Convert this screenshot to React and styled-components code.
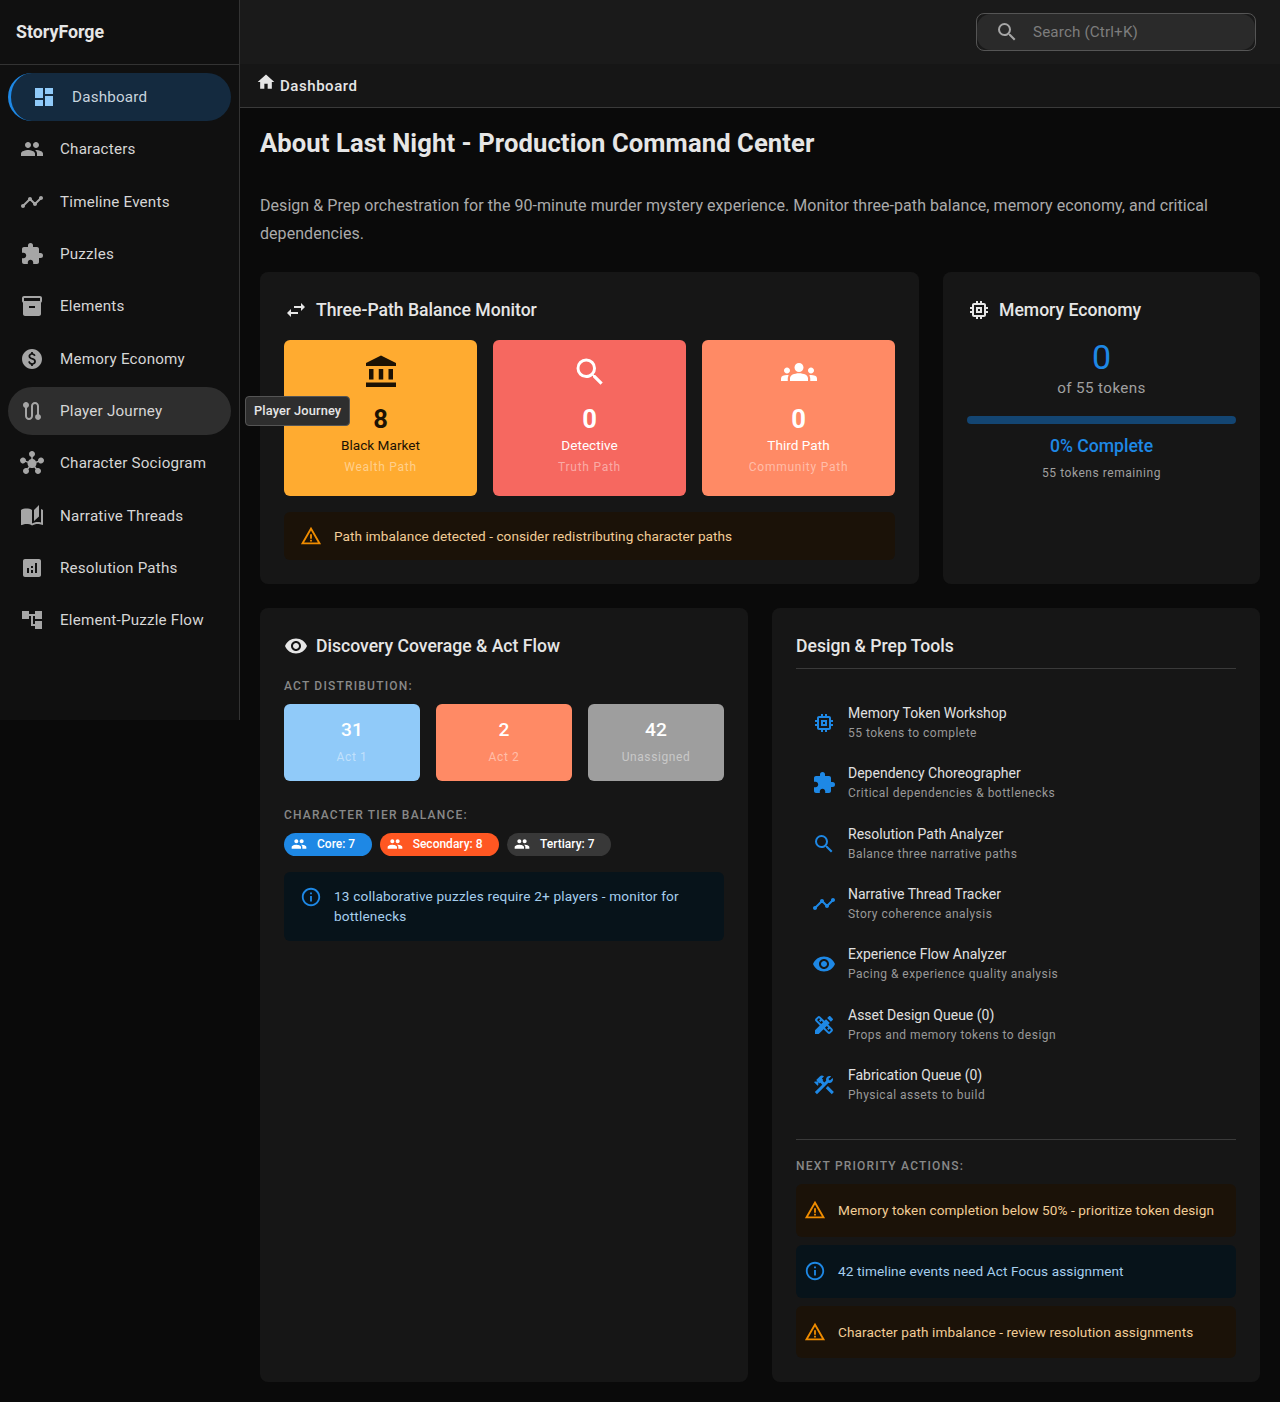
import styled, { createGlobalStyle } from "styled-components";
import {
  MdDashboard,
  MdPeople,
  MdTimeline,
  MdExtension,
  MdInventory2,
  MdPaid,
  MdRoute,
  MdHub,
  MdAutoStories,
  MdAnalytics,
  MdAccountTree,
  MdHome,
  MdSearch,
  MdSwapHoriz,
  MdMemory,
  MdAccountBalance,
  MdGroups,
  MdWarningAmber,
  MdInfoOutline,
  MdVisibility,
  MdDesignServices,
  MdConstruction,
} from "react-icons/md";

const GlobalStyle = createGlobalStyle`
  html, body {
    margin: 0;
    padding: 0;
    background: #0a0a0a;
  }
  * {
    box-sizing: border-box;
  }
  body {
    font-family: Roboto, "Liberation Sans", sans-serif;
    color: #e6e6e6;
  }
`;

const Shell = styled.div`
  display: flex;
  align-items: flex-start;
  width: 1280px;
  height: 1402px;
  overflow: hidden;
`;

const Sidebar = styled.aside`
  flex: 0 0 240px;
  height: 720px;
  background: #101010;
  border-right: 1px solid #333;
`;

const Brand = styled.div`
  display: flex;
  align-items: center;
  height: 65px;
  padding: 0 0 2px 16px;
  border-bottom: 1px solid #333;
  font-size: 17.8px;
  font-weight: 700;
  color: #e6e6e6;
`;

const NavList = styled.nav`
  display: flex;
  flex-direction: column;
  gap: 4px;
  padding: 8px;
`;

const NavItem = styled.div`
  position: relative;
  display: flex;
  align-items: center;
  height: 48.3px;
  padding-left: ${(props) => (props.$active ? "22px" : "12px")};
  border-radius: 24px;
  border-left: ${(props) => (props.$active ? "3px solid #1e88e5" : "none")};
  background: ${(props) => (props.$active ? "#142a3f" : props.$hover ? "#2e2e2e" : "transparent")};
  font-size: 15.2px;
  letter-spacing: 0.2px;
  color: ${(props) => (props.$active ? "#c8d4de" : "#d6d6d6")};

  & > svg {
    flex: none;
    font-size: 24px;
    color: ${(props) => (props.$active ? "#90caf9" : "#a6a6a6")};
    margin-right: 16px;
    margin-left: ${(props) => (props.$active ? "-1px" : "0")};
  }
`;

const Tooltip = styled.div`
  position: absolute;
  left: 237px;
  top: 9px;
  height: 30px;
  display: flex;
  align-items: center;
  padding: 0 8px;
  background: #2e2e2e;
  border: 1px solid #555;
  border-radius: 4px;
  font-size: 12.8px;
  font-weight: 500;
  letter-spacing: 0.15px;
  color: #e6e6e6;
  white-space: nowrap;
  z-index: 5;
`;

const Main = styled.main`
  flex: 1;
  min-width: 0;
`;

const TopBar = styled.header`
  display: flex;
  align-items: center;
  justify-content: flex-end;
  height: 64px;
  padding-right: 24px;
  background: #1a1a1a;
`;

const SearchBox = styled.div`
  width: 280px;
  height: 38px;
  border: 1px solid #555;
  border-radius: 8px;
`;

const SearchField = styled.div`
  display: flex;
  align-items: center;
  height: 100%;
  padding-left: 18px;
  background: #2a2a2a;
  border-radius: 14px;
  font-size: 15.2px;
  letter-spacing: 0.15px;
  color: #7d7d7d;

  & > svg {
    font-size: 24px;
    color: #a6a6a6;
    margin-right: 14px;
  }
`;

const Crumbs = styled.div`
  display: flex;
  align-items: center;
  height: 44px;
  padding-left: 18px;
  background: #161616;
  border-bottom: 1px solid #3a3a3a;
  font-size: 15px;
  font-weight: 500;
  letter-spacing: 0.55px;
  color: #e6e6e6;

  & > svg {
    font-size: 20px;
    margin-right: 4px;
    margin-top: -7px;
    margin-left: -2px;
  }
`;

const Content = styled.div`
  padding: 20px;
`;

const PageTitle = styled.h1`
  margin: 0;
  font-size: 25.6px;
  font-weight: 700;
  letter-spacing: 0.1px;
  line-height: 30px;
  color: #e6e6e6;
`;

const Intro = styled.p`
  margin: 34px 0 24px;
  font-size: 16px;
  letter-spacing: 0.05px;
  line-height: 28px;
  color: #ababab;
`;

const Row = styled.div`
  display: grid;
  grid-template-columns: ${(props) => props.$columns};
  gap: 24px;
  margin-bottom: 24px;

  &:last-child {
    margin-bottom: 0;
  }
`;

const Card = styled.section`
  padding: 24px;
  background: #161616;
  border-radius: 8px;
`;

const CardTitle = styled.h2`
  display: flex;
  align-items: center;
  gap: 8px;
  margin: 0 0 ${(props) => props.$gap || "16px"};
  height: 28px;
  font-size: 17.6px;
  font-weight: 500;
  color: #e6e6e6;

  & > svg {
    font-size: 24px;
  }
`;

const TileRow = styled.div`
  display: grid;
  grid-template-columns: repeat(3, 1fr);
  gap: 16px;
`;

const PathTile = styled.div`
  display: flex;
  flex-direction: column;
  align-items: center;
  height: 156px;
  padding-top: 14px;
  border-radius: 6px;
  background: ${(props) => props.$bg};
  color: ${(props) => props.$fg};

  & > svg {
    font-size: 36px;
  }
`;

const TileNumber = styled.div`
  margin-top: 14px;
  font-size: 25.6px;
  font-weight: 700;
  line-height: 30px;
`;

const TileName = styled.div`
  margin-top: 1px;
  font-size: 13.6px;
  line-height: 20px;
`;

const TileNote = styled.div`
  margin-top: 2px;
  font-size: 12px;
  letter-spacing: 0.75px;
  line-height: 20px;
  color: rgba(255, 255, 255, 0.45);
`;

const Alert = styled.div`
  display: flex;
  align-items: ${(props) => (props.$top ? "flex-start" : "center")};
  min-height: ${(props) => props.$height || "48px"};
  padding: ${(props) => props.$padding || "0 16px"};
  margin-top: ${(props) => props.$mt || "0"};
  border-radius: 6px;
  background: ${(props) => (props.$kind === "info" ? "#07131a" : "#1b1208")};
  color: ${(props) => (props.$kind === "info" ? "#a6cfee" : "#f2cd97")};
  font-size: 13.6px;
  letter-spacing: ${(props) => props.$spacing || "0.1px"};
  line-height: 20px;

  & > svg {
    flex: none;
    font-size: 22px;
    margin-right: 12px;
    color: ${(props) => (props.$kind === "info" ? "#1e88e5" : "#ef8c00")};
  }
`;

const MemoryBody = styled.div`
  display: flex;
  flex-direction: column;
  align-items: center;
  margin-top: -3px;
`;

const MemoryCount = styled.div`
  font-size: 34px;
  line-height: 40px;
  color: #1e88e5;
`;

const MemoryOf = styled.div`
  font-size: 15.2px;
  letter-spacing: 0.4px;
  line-height: 22px;
  color: #a0a0a0;
`;

const ProgressBar = styled.div`
  width: 100%;
  height: 8px;
  margin: 17px 0 9px;
  border-radius: 4px;
  background: #134572;
`;

const MemoryPercent = styled.div`
  font-size: 17.6px;
  font-weight: 500;
  line-height: 26px;
  color: #1e88e5;
`;

const MemoryLeft = styled.div`
  margin-top: 4px;
  font-size: 12px;
  letter-spacing: 0.55px;
  line-height: 20px;
  color: #a0a0a0;
`;

const SectionLabel = styled.div`
  margin: ${(props) => props.$margin || "0 0 10px"};
  font-size: 12px;
  font-weight: 500;
  letter-spacing: 1.2px;
  line-height: 16px;
  color: #888;
`;

const ActTile = styled.div`
  display: flex;
  flex-direction: column;
  align-items: center;
  height: 77px;
  padding-top: 12px;
  border-radius: 6px;
  background: ${(props) => props.$bg};
`;

const ActNumber = styled.div`
  font-size: 19.2px;
  font-weight: 500;
  line-height: 28px;
  color: #fff;
`;

const ActName = styled.div`
  margin-top: 3px;
  font-size: 12px;
  letter-spacing: 0.6px;
  line-height: 20px;
  color: rgba(255, 255, 255, 0.45);
`;

const ChipRow = styled.div`
  display: flex;
  gap: 8px;
`;

const Chip = styled.div`
  display: flex;
  align-items: center;
  height: 23px;
  padding: 0 16.5px 1px 7px;
  border-radius: 12px;
  background: ${(props) => props.$bg};
  color: #fff;
  font-size: 12px;
  font-weight: 500;

  & > svg {
    font-size: 16px;
    margin-right: 10px;
  }
`;

const Divider = styled.div`
  height: 1px;
  background: #3a3a3a;
`;

const ToolList = styled.div`
  padding: 24px 0;
`;

const ToolItem = styled.div`
  display: flex;
  align-items: center;
  height: 60.3px;
  padding-left: 16px;

  & > svg {
    flex: none;
    font-size: 24px;
    margin-right: 12px;
    color: #1e88e5;
  }
`;

const ToolName = styled.div`
  font-size: 14px;
  line-height: 20px;
  color: #e0e0e0;
`;

const ToolNote = styled.div`
  font-size: 12px;
  line-height: 20px;
  letter-spacing: 0.48px;
  color: #999;
`;

const ActionStack = styled.div`
  display: flex;
  flex-direction: column;
  gap: 8px;
`;

const navItems = [
  { icon: MdDashboard, label: "Dashboard", active: true },
  { icon: MdPeople, label: "Characters" },
  { icon: MdTimeline, label: "Timeline Events" },
  { icon: MdExtension, label: "Puzzles" },
  { icon: MdInventory2, label: "Elements" },
  { icon: MdPaid, label: "Memory Economy" },
  { icon: MdRoute, label: "Player Journey", hover: true },
  { icon: MdHub, label: "Character Sociogram" },
  { icon: MdAutoStories, label: "Narrative Threads" },
  { icon: MdAnalytics, label: "Resolution Paths" },
  { icon: MdAccountTree, label: "Element-Puzzle Flow" },
];

const paths = [
  { icon: MdAccountBalance, count: 8, name: "Black Market", note: "Wealth Path", bg: "#ffab30", fg: "#1c1204" },
  { icon: MdSearch, count: 0, name: "Detective", note: "Truth Path", bg: "#f66860", fg: "#fff" },
  { icon: MdGroups, count: 0, name: "Third Path", note: "Community Path", bg: "#ff8a65", fg: "#fff" },
];

const acts = [
  { count: 31, name: "Act 1", bg: "#90caf9" },
  { count: 2, name: "Act 2", bg: "#ff8a65" },
  { count: 42, name: "Unassigned", bg: "#9e9e9e" },
];

const tiers = [
  { label: "Core: 7", bg: "#1e88e5" },
  { label: "Secondary: 8", bg: "#ff5722" },
  { label: "Tertiary: 7", bg: "#383838" },
];

const tools = [
  { icon: MdMemory, name: "Memory Token Workshop", note: "55 tokens to complete" },
  { icon: MdExtension, name: "Dependency Choreographer", note: "Critical dependencies & bottlenecks" },
  { icon: MdSearch, name: "Resolution Path Analyzer", note: "Balance three narrative paths" },
  { icon: MdTimeline, name: "Narrative Thread Tracker", note: "Story coherence analysis" },
  { icon: MdVisibility, name: "Experience Flow Analyzer", note: "Pacing & experience quality analysis" },
  { icon: MdDesignServices, name: "Asset Design Queue (0)", note: "Props and memory tokens to design" },
  { icon: MdConstruction, name: "Fabrication Queue (0)", note: "Physical assets to build" },
];

const actions = [
  { kind: "warning", text: "Memory token completion below 50% - prioritize token design" },
  { kind: "info", text: "42 timeline events need Act Focus assignment" },
  { kind: "warning", text: "Character path imbalance - review resolution assignments" },
];

export default function App() {
  return (
    <>
      <GlobalStyle />
      <Shell>
        <Sidebar>
          <Brand>StoryForge</Brand>
          <NavList>
            {navItems.map((item) => (
              <NavItem key={item.label} $active={item.active} $hover={item.hover}>
                <item.icon />
                {item.label}
                {item.hover ? <Tooltip>{item.label}</Tooltip> : null}
              </NavItem>
            ))}
          </NavList>
        </Sidebar>

        <Main>
          <TopBar>
            <SearchBox>
              <SearchField>
                <MdSearch />
                Search (Ctrl+K)
              </SearchField>
            </SearchBox>
          </TopBar>
          <Crumbs>
            <MdHome />
            Dashboard
          </Crumbs>

          <Content>
            <PageTitle>About Last Night - Production Command Center</PageTitle>
            <Intro>
              Design &amp; Prep orchestration for the 90-minute murder mystery experience. Monitor three-path
              balance, memory economy, and critical dependencies.
            </Intro>

            <Row $columns="659fr 317fr">
              <Card>
                <CardTitle>
                  <MdSwapHoriz />
                  Three-Path Balance Monitor
                </CardTitle>
                <TileRow>
                  {paths.map((path) => (
                    <PathTile key={path.name} $bg={path.bg} $fg={path.fg}>
                      <path.icon />
                      <TileNumber>{path.count}</TileNumber>
                      <TileName>{path.name}</TileName>
                      <TileNote>{path.note}</TileNote>
                    </PathTile>
                  ))}
                </TileRow>
                <Alert $kind="warning" $mt="16px" $spacing="0.06px">
                  <MdWarningAmber />
                  Path imbalance detected - consider redistributing character paths
                </Alert>
              </Card>

              <Card>
                <CardTitle>
                  <MdMemory />
                  Memory Economy
                </CardTitle>
                <MemoryBody>
                  <MemoryCount>0</MemoryCount>
                  <MemoryOf>of 55 tokens</MemoryOf>
                  <ProgressBar />
                  <MemoryPercent>0% Complete</MemoryPercent>
                  <MemoryLeft>55 tokens remaining</MemoryLeft>
                </MemoryBody>
              </Card>
            </Row>

            <Row $columns="1fr 1fr">
              <Card>
                <CardTitle $gap="18px">
                  <MdVisibility />
                  Discovery Coverage &amp; Act Flow
                </CardTitle>
                <SectionLabel>ACT DISTRIBUTION:</SectionLabel>
                <TileRow>
                  {acts.map((act) => (
                    <ActTile key={act.name} $bg={act.bg}>
                      <ActNumber>{act.count}</ActNumber>
                      <ActName>{act.name}</ActName>
                    </ActTile>
                  ))}
                </TileRow>
                <SectionLabel $margin="26px 0 10px">CHARACTER TIER BALANCE:</SectionLabel>
                <ChipRow>
                  {tiers.map((tier) => (
                    <Chip key={tier.label} $bg={tier.bg}>
                      <MdPeople />
                      {tier.label}
                    </Chip>
                  ))}
                </ChipRow>
                <Alert $kind="info" $top $mt="16px" $padding="14px 16px 15px" $spacing="0.18px">
                  <MdInfoOutline />
                  13 collaborative puzzles require 2+ players - monitor for bottlenecks
                </Alert>
              </Card>

              <Card>
                <CardTitle $gap="8px">Design &amp; Prep Tools</CardTitle>
                <Divider />
                <ToolList>
                  {tools.map((tool) => (
                    <ToolItem key={tool.name}>
                      <tool.icon />
                      <div>
                        <ToolName>{tool.name}</ToolName>
                        <ToolNote>{tool.note}</ToolNote>
                      </div>
                    </ToolItem>
                  ))}
                </ToolList>
                <Divider />
                <SectionLabel $margin="18px 0 10px">NEXT PRIORITY ACTIONS:</SectionLabel>
                <ActionStack>
                  {actions.map((action) => (
                    <Alert key={action.text} $kind={action.kind} $height="52.8px" $padding="0 8px">
                      {action.kind === "info" ? <MdInfoOutline /> : <MdWarningAmber />}
                      {action.text}
                    </Alert>
                  ))}
                </ActionStack>
              </Card>
            </Row>
          </Content>
        </Main>
      </Shell>
    </>
  );
}
